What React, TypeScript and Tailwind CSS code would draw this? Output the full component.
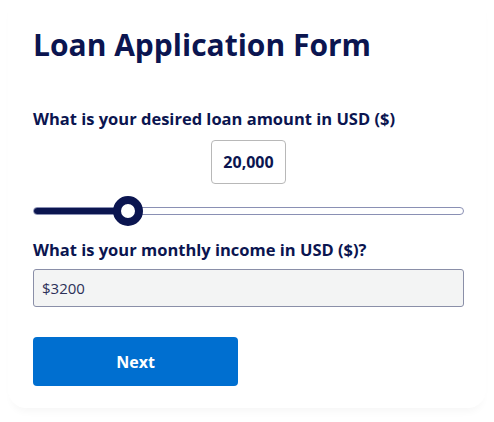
export default function App() {
  return (
    <div className="h-[422px] w-[494px] overflow-hidden bg-white" style={{ fontFamily: '"Open Sans", "Noto Sans", sans-serif' }}>
      <div className="mx-[8px] h-[408px] rounded-b-[18px] bg-white pl-[25px] pr-[22px] pt-[25px] shadow-[0_7px_8px_-4px_rgba(0,0,0,0.04)]">
        <h1 className="text-[30px] font-bold leading-[40px] text-[#0b1550]">Loan Application Form</h1>

        <label className="mt-[42px] block text-[16.5px] font-bold leading-[24px] text-[#0b1550]">
          What is your desired loan amount in USD ($)
        </label>
        <div className="mt-[9px] flex justify-center">
          <div className="flex h-[44px] w-[75px] items-center justify-center rounded-[4px] border border-[#b8b8b8] text-[16px] font-bold text-[#0b1550]">
            20,000
          </div>
        </div>

        <div className="relative mt-[12px] flex h-[30px] items-center">
          <div className="flex h-[8px] w-full overflow-hidden rounded-full border border-[#8a90b4] bg-white">
            <div className="h-full w-[22%] bg-[#0b1550]"></div>
          </div>
          <div className="absolute left-[80px] top-0 h-[30px] w-[30px] rounded-full border-[8px] border-[#0b1550] bg-white"></div>
        </div>

        <label className="mt-[12px] block text-[16.5px] font-bold leading-[24px] text-[#0b1550]">
          What is your monthly income in USD ($)?
        </label>
        <div className="mt-[7px] flex h-[38px] items-center rounded-[3px] border border-[#8a8fa8] bg-[#f3f4f4] px-[8px] text-[15px] text-[#2b3058]">
          $3200
        </div>

        <button className="mt-[30px] flex h-[49px] w-[205px] items-center justify-center rounded-[4px] bg-[#006fd0] text-[16px] font-bold text-white">
          Next
        </button>
      </div>
    </div>
  );
}
